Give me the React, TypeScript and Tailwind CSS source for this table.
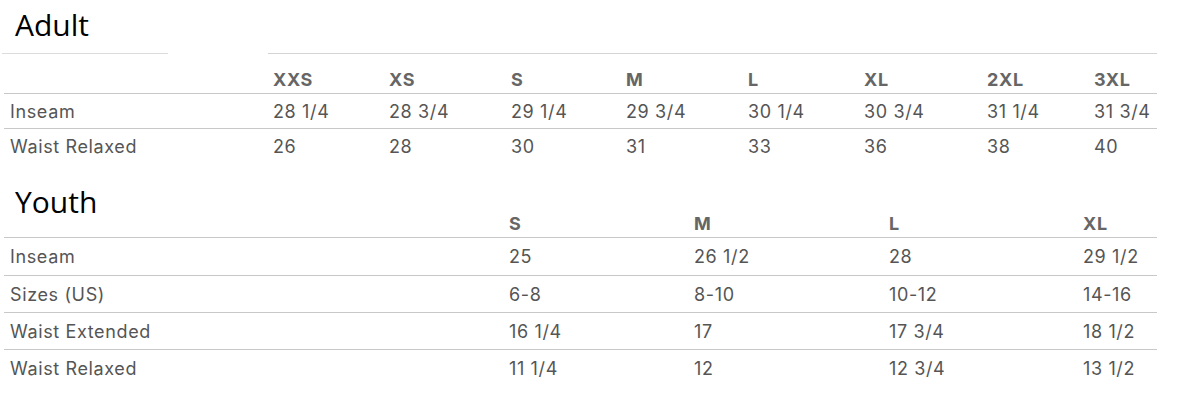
import React from 'react';

type Row = { label: string; values: string[] };

const adultSizes = ['XXS', 'XS', 'S', 'M', 'L', 'XL', '2XL', '3XL'];
const adultRows: Row[] = [
  { label: 'Inseam', values: ['28 1/4', '28 3/4', '29 1/4', '29 3/4', '30 1/4', '30 3/4', '31 1/4', '31 3/4'] },
  { label: 'Waist Relaxed', values: ['26', '28', '30', '31', '33', '36', '38', '40'] },
];

const youthSizes = ['S', 'M', 'L', 'XL'];
const youthRows: Row[] = [
  { label: 'Inseam', values: ['25', '26 1/2', '28', '29 1/2'] },
  { label: 'Sizes (US)', values: ['6-8', '8-10', '10-12', '14-16'] },
  { label: 'Waist Extended', values: ['16 1/4', '17', '17 3/4', '18 1/2'] },
  { label: 'Waist Relaxed', values: ['11 1/4', '12', '12 3/4', '13 1/2'] },
];

const adultCols = 'grid-cols-[264px_116px_122px_115px_122px_116px_123px_107px_68px]';
const youthCols = 'grid-cols-[500px_185px_195px_194px_79px]';

const bodyFont = { fontFamily: 'Inter, "Liberation Sans", sans-serif' };
const headFont = { fontFamily: '"Open Sans", "Liberation Sans", sans-serif' };

function DataRow({ row, cols, last, height }: { row: Row; cols: string; last?: boolean; height: string }) {
  return (
    <div className={`grid ${cols} ${height} items-center ${last ? '' : 'border-b border-[#c8c8c8]'}`}>
      <div className="pl-[6px]">{row.label}</div>
      {row.values.map((v, i) => (
        <div key={i} className="pl-[5px]">
          {v}
        </div>
      ))}
    </div>
  );
}

export default function App() {
  return (
    <div
      className="w-[1178px] h-[400px] bg-white text-[#555] text-[18px] tracking-[0.035em]"
      style={bodyFont}
    >
      <div className="w-[1153px] ml-[4px]">
        {/* Adult */}
        <h2 className="pl-[11px] pt-[10px] text-[30px] leading-none tracking-normal text-black" style={headFont}>
          Adult
        </h2>
        <div className="flex mt-[13px] -ml-[2px]">
          <div className="w-[166px] border-t border-[#dcdcdc]" />
          <div className="ml-[100px] flex-1 border-t border-[#d4d4d4]" />
        </div>
        <div className={`grid ${adultCols} h-[40px] items-end border-b border-[#c8c8c8] font-bold text-[#666]`}>
          <div />
          {adultSizes.map((s) => (
            <div key={s} className="pl-[5px]">
              {s}
            </div>
          ))}
        </div>
        {adultRows.map((r, i) => (
          <DataRow key={r.label} row={r} cols={adultCols} last={i === adultRows.length - 1} height="h-[35px]" />
        ))}

        {/* Youth */}
        <div className={`grid ${youthCols} mt-[21px] h-[53px] border-b border-[#c8c8c8]`}>
          <h2 className="pl-[11px] pt-[2px] text-[30px] leading-none tracking-normal text-black self-start" style={headFont}>
            Youth
          </h2>
          {youthSizes.map((s) => (
            <div key={s} className="pl-[5px] self-end font-bold text-[#666]">
              {s}
            </div>
          ))}
        </div>
        {youthRows.map((r, i) => (
          <DataRow
            key={r.label}
            row={r}
            cols={youthCols}
            last={i === youthRows.length - 1}
            height={i === 0 ? 'h-[38px]' : 'h-[37px]'}
          />
        ))}
      </div>
    </div>
  );
}
